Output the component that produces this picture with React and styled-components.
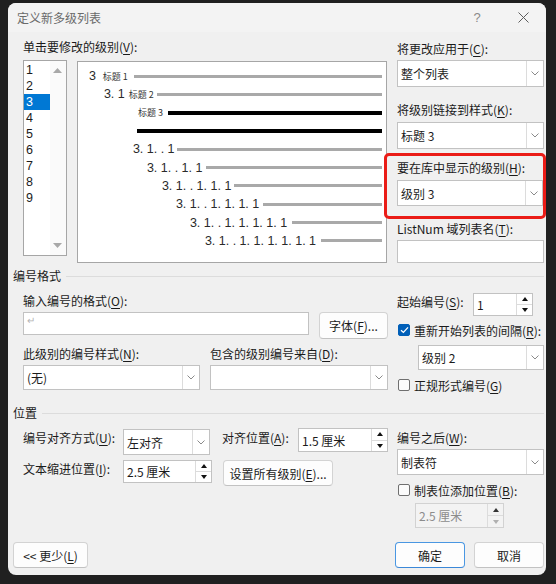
import React from "react"
import styled, { createGlobalStyle } from "styled-components"

const GlobalStyle = createGlobalStyle`
  html, body {
    margin: 0;
    background: #202020;
  }
  body {
    font-family: "Noto Sans CJK SC", "Noto Sans", sans-serif;
  }
`

const previewRows = [
  { indent: 11, labW: 45, num: '3', tag: '标题 1', tagGap: 7 },
  { indent: 26, labW: 53, num: '3. 1', tag: '标题 2', tagGap: 4 },
  { indent: 60, labW: 30, tag: '标题 3', dark: true },
  { indent: 59, labW: 0, dark: true },
  { indent: 55, labW: 44, num: '3. 1. . 1' },
  { indent: 69, labW: 59, num: '3. 1. . 1. 1' },
  { indent: 84, labW: 72, num: '3. 1. . 1. 1. 1' },
  { indent: 98, labW: 87, num: '3. 1. . 1. 1. 1. 1' },
  { indent: 112, labW: 102, num: '3. 1. . 1. 1. 1. 1. 1' },
  { indent: 127, labW: 116, num: '3. 1. . 1. 1. 1. 1. 1. 1' },
]

const levels = ['1', '2', '3', '4', '5', '6', '7', '8', '9']

const Dialog = styled.div`
  width: 538px;
  height: 572px;
  margin: 3px 0 0 8px;
  background: #f0f0f0;
  border-radius: 8px;
  overflow: hidden;
  display: flex;
  flex-direction: column;
  font-family: "Noto Sans CJK SC", "Noto Sans", sans-serif;
  font-size: 12px;
  color: #1b1b1b;
  box-sizing: border-box;
  & * {
    box-sizing: border-box;
  }
  u {
    text-underline-offset: 2px;
  }
`
const TitleBar = styled.div`
  height: 29px;
  flex-shrink: 0;
  display: flex;
  align-items: center;
  padding-left: 9px;
  background: #f3f3f3;
  color: #6a6a6a;
`
const TitleText = styled.div`
  flex: 1;
  line-height: 16px;
`
const TitleButton = styled.div`
  width: 46px;
  height: 29px;
  display: flex;
  align-items: center;
  justify-content: center;
  color: #8a8a8a;
  font-size: 13px;
  font-family: "Liberation Sans", sans-serif;
`
const Body = styled.div`
  flex: 1;
  display: flex;
  flex-direction: column;
  padding: 0 2px 0 5px;
`
const Top = styled.div`
  display: flex;
  gap: 10px;
  padding-left: 10px;
`
const Column = styled.div`
  display: flex;
  flex-direction: column;
  width: ${p => p.$w}px;
  margin-top: ${p => p.$mt || 0}px;
  margin-left: ${p => p.$ml || 0}px;
`
const Row = styled.div`
  display: flex;
  align-items: flex-start;
  gap: ${p => p.$gap || 0}px;
  margin-top: ${p => p.$mt || 0}px;
  margin-left: ${p => p.$ml || 0}px;
`
const Label = styled.div`
  line-height: 16px;
  white-space: nowrap;
  margin-top: ${p => p.$mt || 0}px;
  margin-left: ${p => p.$ml || 0}px;
  ${p => p.$w && `width: ${p.$w}px; flex-shrink: 0;`}
`
const LevelList = styled.div`
  width: 44px;
  height: 196px;
  background: #fff;
  border: 1px solid #a6a6a6;
  display: flex;
`
const LevelItems = styled.div`
  width: 26px;
  padding-top: 1px;
`
const LevelItem = styled.div`
  height: 16px;
  line-height: 16px;
  padding-left: 2px;
  font-family: "Liberation Sans", sans-serif;
  font-size: 12.5px;
  background: ${p => (p.$active ? '#0078d4' : 'transparent')};
  color: ${p => (p.$active ? '#fff' : '#1b1b1b')};
`
const ScrollTrack = styled.div`
  flex: 1;
  display: flex;
  flex-direction: column;
  justify-content: space-between;
  align-items: center;
  padding: 7px 0 7px;
  background: #fafafa;
`
const Preview = styled.div`
  width: 311px;
  height: 202px;
  margin-top: 1px;
  background: #fff;
  border: 1px solid #a6a6a6;
  padding-top: 5px;
`
const PreviewRow = styled.div`
  height: 18.3px;
  display: flex;
  align-items: center;
  padding-left: ${p => p.$indent}px;
  padding-right: 4px;
`
const PreviewLabel = styled.div`
  width: ${p => p.$w}px;
  flex-shrink: 0;
  display: flex;
  align-items: center;
  white-space: pre;
`
const PreviewNum = styled.span`
  font-family: "Liberation Sans", sans-serif;
  font-size: 12.5px;
  color: #2a2a2a;
`
const PreviewTag = styled.span`
  font-size: 9px;
  color: #333;
  margin-left: ${p => p.$gap || 0}px;
`
const Bar = styled.div`
  flex: 1;
  height: ${p => (p.$dark ? 4 : 3)}px;
  background: ${p => (p.$dark ? '#000' : '#a9a9a9')};
`
const Highlight = styled.div`
  margin: 4px -2px 0 -13px;
  padding: 4px 0 10px 10px;
  border: 3px solid #ea1c17;
  border-radius: 5px;
  display: flex;
  flex-direction: column;
`
const Field = styled.div`
  height: ${p => p.$h}px;
  ${p => (p.$w ? `width: ${p.$w}px;` : '')}
  flex-shrink: 0;
  margin-top: ${p => p.$mt || 0}px;
  margin-left: ${p => p.$ml || 0}px;
  background: ${p => (p.$disabled ? '#f3f3f3' : '#fff')};
  border: 1px solid ${p => (p.$disabled ? '#d2d2d2' : '#c2c2c2')};
  color: ${p => (p.$disabled ? '#8c8c8c' : '#1b1b1b')};
  display: flex;
  align-items: stretch;
`
const FieldValue = styled.div`
  flex: 1;
  display: flex;
  align-items: center;
  padding-left: 3px;
  white-space: nowrap;
`
const DropButton = styled.div`
  width: 17px;
  border-left: 1px solid #dcdcdc;
  display: flex;
  align-items: center;
  justify-content: center;
`
const SpinButtons = styled.div`
  width: 16px;
  border-left: 1px solid #dcdcdc;
  display: flex;
  flex-direction: column;
`
const SpinHalf = styled.div`
  flex: 1;
  display: flex;
  align-items: center;
  justify-content: center;
  & + & {
    border-top: 1px solid #dcdcdc;
  }
`
const ReturnMark = styled.span`
  align-self: flex-start;
  margin: 1px 0 0 3px;
  font-size: 10px;
  line-height: 12px;
  color: #b4b4b4;
`
const PushButton = styled.div`
  width: ${p => p.$w}px;
  height: ${p => p.$h || 26}px;
  flex-shrink: 0;
  margin-left: ${p => p.$ml || 0}px;
  display: flex;
  align-items: center;
  justify-content: center;
  white-space: nowrap;
  background: #fdfdfd;
  border: 1px solid ${p => (p.$primary ? '#4a97e2' : '#d3d3d3')};
  border-bottom-color: ${p => (p.$primary ? '#3b88d8' : '#c2c2c2')};
  border-radius: 4px;
`
const CheckRow = styled.div`
  display: flex;
  align-items: center;
  height: 16px;
  margin-top: ${p => p.$mt || 0}px;
  white-space: nowrap;
`
const CheckBox = styled.div`
  width: 12px;
  height: 12px;
  margin: 0 4px 0 1px;
  border-radius: 2px;
  display: flex;
  align-items: center;
  justify-content: center;
  background: ${p => (p.$checked ? '#005fb8' : '#fbfbfb')};
  border: 1px solid ${p => (p.$checked ? '#005fb8' : '#6f6f6f')};
`
const SectionTitle = styled.div`
  display: flex;
  align-items: center;
  line-height: 16px;
  margin-top: ${p => p.$mt || 0}px;
  &::after {
    content: '';
    flex: 1;
    height: 1px;
    margin-left: 5px;
    background: #dcdcdc;
  }
`
const SectionBody = styled.div`
  display: flex;
  align-items: flex-start;
  gap: 9px;
  padding-left: 10px;
`
const Footer = styled.div`
  margin-top: auto;
  padding-bottom: 7px;
  display: flex;
  align-items: center;
`
const Spacer = styled.div`
  flex: 1;
`

const Chevron = () => (
  <svg width="8" height="5" viewBox="0 0 8 5">
    <polyline points="0.5,0.5 4,4 7.5,0.5" fill="none" stroke="#8a8a8a" strokeWidth="1" />
  </svg>
)

const Triangle = ({ down, color = '#111', w = 7, h = 4 }) => (
  <svg width={w} height={h} viewBox={`0 0 ${w} ${h}`}>
    <polygon points={down ? `0,0 ${w},0 ${w / 2},${h}` : `0,${h} ${w},${h} ${w / 2},0`} fill={color} />
  </svg>
)

const CloseGlyph = () => (
  <svg width="11" height="11" viewBox="0 0 11 11">
    <path d="M0.5 0.5 L10.5 10.5 M10.5 0.5 L0.5 10.5" stroke="#5c5c5c" strokeWidth="1" />
  </svg>
)

const CheckMark = () => (
  <svg width="9" height="8" viewBox="0 0 9 8">
    <polyline points="1,4.2 3.4,6.4 8,1.4" fill="none" stroke="#fff" strokeWidth="1.3" />
  </svg>
)

const Select = ({ children, ...rest }) => (
  <Field {...rest}>
    <FieldValue>{children}</FieldValue>
    <DropButton><Chevron /></DropButton>
  </Field>
)

const Spin = ({ children, disabled, ...rest }) => (
  <Field $disabled={disabled} {...rest}>
    <FieldValue>{children}</FieldValue>
    <SpinButtons>
      <SpinHalf><Triangle w={6} h={4} color={disabled ? '#333' : '#111'} /></SpinHalf>
      <SpinHalf><Triangle down w={6} h={4} color={disabled ? '#b0b0b0' : '#111'} /></SpinHalf>
    </SpinButtons>
  </Field>
)

const Check = ({ checked, children, mt }) => (
  <CheckRow $mt={mt}>
    <CheckBox $checked={checked}>{checked && <CheckMark />}</CheckBox>
    {children}
  </CheckRow>
)

const App = () => (
  <>
    <GlobalStyle />
    <Dialog>
      <TitleBar>
        <TitleText>定义新多级列表</TitleText>
        <TitleButton>?</TitleButton>
        <TitleButton><CloseGlyph /></TitleButton>
      </TitleBar>
      <Body>
        <Top>
          <Column $w={364}>
            <Label $mt={7}>单击要修改的级别(<u>V</u>):</Label>
            <Row $mt={5} $gap={10}>
              <LevelList>
                <LevelItems>
                  {levels.map(l => (
                    <LevelItem key={l} $active={l === '3'}>{l}</LevelItem>
                  ))}
                </LevelItems>
                <ScrollTrack>
                  <Triangle w={9} h={5} color="#a8a8a8" />
                  <Triangle down w={9} h={5} color="#a8a8a8" />
                </ScrollTrack>
              </LevelList>
              <Preview>
                {previewRows.map((r, i) => (
                  <PreviewRow key={i} $indent={r.indent}>
                    <PreviewLabel $w={r.labW}>
                      {r.num && <PreviewNum>{r.num}</PreviewNum>}
                      {r.tag && <PreviewTag $gap={r.tagGap}>{r.tag}</PreviewTag>}
                    </PreviewLabel>
                    <Bar $dark={r.dark} />
                  </PreviewRow>
                ))}
              </Preview>
            </Row>
          </Column>
          <Column $w={147}>
            <Label $mt={9}>将更改应用于(<u>C</u>):</Label>
            <Select $mt={3} $h={27}>整个列表</Select>
            <Label $mt={15}>将级别链接到样式(<u>K</u>):</Label>
            <Select $mt={4} $h={27}>标题 3</Select>
            <Highlight>
              <Label>要在库中显示的级别(<u>H</u>):</Label>
              <Select $mt={4} $h={26}>级别 3</Select>
            </Highlight>
            <Label $mt={2}>ListNum 域列表名(<u>T</u>):</Label>
            <Field $mt={3} $h={23} />
          </Column>
        </Top>

        <SectionTitle $mt={5}>编号格式</SectionTitle>
        <SectionBody>
          <Column $w={365}>
            <Label $mt={9}>输入编号的格式(<u>O</u>):</Label>
            <Row $mt={3} $gap={10}>
              <Field $w={286} $h={23}><ReturnMark>↵</ReturnMark></Field>
              <PushButton $w={69} $h={27}>字体(<u>F</u>)...</PushButton>
            </Row>
            <Row $mt={7} $gap={10}>
              <Column $w={177}>
                <Label>此级别的编号样式(<u>N</u>):</Label>
                <Select $mt={3} $h={25}>(无)</Select>
              </Column>
              <Column $w={178}>
                <Label>包含的级别编号来自(<u>D</u>):</Label>
                <Select $mt={3} $h={25} />
              </Column>
            </Row>
          </Column>
          <Column $w={147}>
            <Row $mt={9}>
              <Label $w={76} $mt={1}>起始编号(<u>S</u>):</Label>
              <Spin $w={60} $h={23}>1</Spin>
            </Row>
            <Check checked mt={6}>重新开始列表的间隔(<u>R</u>):</Check>
            <Select $mt={7} $ml={21} $h={25}>级别 2</Select>
            <Check mt={7}>正规形式编号(<u>G</u>)</Check>
          </Column>
        </SectionBody>

        <SectionTitle $mt={12}>位置</SectionTitle>
        <SectionBody>
          <Column $w={365}>
            <Row $mt={7}>
              <Label $w={100} $mt={2}>编号对齐方式(<u>U</u>):</Label>
              <Select $w={87} $h={26} $mt={1}>左对齐</Select>
              <Label $w={76} $ml={12} $mt={2}>对齐位置(<u>A</u>):</Label>
              <Spin $w={90} $h={24}>1.5 厘米</Spin>
            </Row>
            <Row $mt={5}>
              <Label $w={100} $mt={1}>文本缩进位置(<u>I</u>):</Label>
              <Spin $w={89} $h={23}>2.5 厘米</Spin>
              <PushButton $w={110} $h={26} $ml={11}>设置所有级别(<u>E</u>)...</PushButton>
            </Row>
          </Column>
          <Column $w={147}>
            <Label $mt={9}>编号之后(<u>W</u>):</Label>
            <Select $mt={3} $h={26}>制表符</Select>
            <Check mt={7}>制表位添加位置(<u>B</u>):</Check>
            <Spin disabled $mt={5} $ml={18} $w={89} $h={25}>2.5 厘米</Spin>
          </Column>
        </SectionBody>

        <Footer>
          <PushButton $w={75}>&lt;&lt; 更少(<u>L</u>)</PushButton>
          <Spacer />
          <PushButton $w={70} $primary>确定</PushButton>
          <PushButton $w={70} $ml={9}>取消</PushButton>
        </Footer>
      </Body>
    </Dialog>
  </>
)

export default App
